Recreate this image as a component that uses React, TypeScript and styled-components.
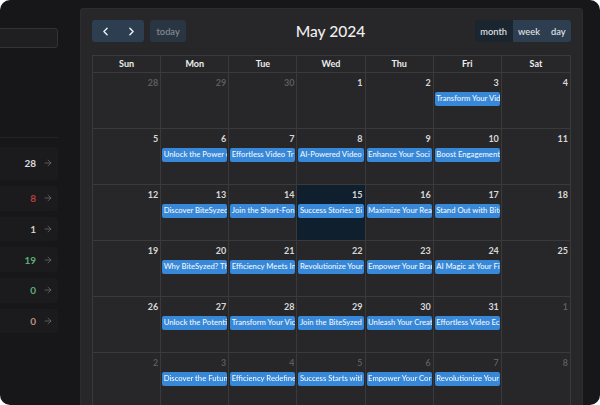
import React from "react"
import styled, {createGlobalStyle} from "styled-components"
import {ArrowRight, ChevronLeft, ChevronRight} from "lucide-react"

const GlobalStyle = createGlobalStyle`
  html, body {
    margin: 0;
    padding: 0;
    background: #fff;
    overflow: hidden;
  }
`

const Screen = styled.div`
  display: flex;
  width: 600px;
  height: 405px;
  padding-top: 8px;
  box-sizing: border-box;
  overflow: hidden;
  background: #171719;
  border-radius: 10px;
  font-family: Lato, "Liberation Sans", sans-serif;
  filter: blur(0.4px);
`

const Sidebar = styled.aside`
  flex: 0 0 58px;
  margin-right: 22px;
  padding-top: 20px;
`

const SearchBox = styled.div`
  height: 18px;
  margin-left: -8px;
  background: #1f1f21;
  border: 1px solid #333335;
  border-radius: 3px;
`

const Divider = styled.div`
  height: 1px;
  margin-top: 89px;
  background: #232325;
`

const StatList = styled.div`
  display: flex;
  flex-direction: column;
  gap: 6px;
  margin-top: 8.5px;
`

const StatRow = styled.div<{$tall?: boolean}>`
  display: flex;
  align-items: center;
  justify-content: flex-end;
  gap: 7px;
  height: ${p => (p.$tall ? 33.5 : 24.7)}px;
  padding-right: 5px;
  background: #1b1b1d;
  border-radius: 0 4px 4px 0;
  color: #7a7a7c;
`

const StatValue = styled.span<{$color: string}>`
  font-size: 10px;
  font-weight: 700;
  color: ${p => p.$color};
`

const CalendarPanel = styled.main`
  flex: 0 0 503px;
  box-sizing: border-box;
  height: 420px;
  padding: 12px 12px 0;
  background: #272729;
  border-radius: 4px;
  box-shadow: inset 0 0 0 1px #2d2d2f;
`

const Toolbar = styled.header`
  display: flex;
  align-items: center;
  justify-content: space-between;
  height: 22px;
  margin-bottom: 13px;
`

const ToolbarGroup = styled.div`
  display: flex;
  gap: 6px;
`

const ButtonGroup = styled.div`
  display: flex;
  overflow: hidden;
  height: 22px;
  border-radius: 3px;
`

const NavButton = styled.div`
  display: flex;
  align-items: center;
  justify-content: center;
  width: 26px;
  background: #2c3e50;
  color: #eef0f2;
`

const TodayButton = styled.div`
  display: flex;
  align-items: center;
  height: 22px;
  padding: 0 6.5px;
  background: #2a3542;
  border-radius: 3px;
  color: #858d95;
  font-size: 9.3px;
  font-weight: 500;
`

const ViewButton = styled.div<{$active?: boolean}>`
  display: flex;
  align-items: center;
  padding: 0 5.5px;
  background: ${p => (p.$active ? "#1a252f" : "#2c3e50")};
  color: #e4e6e8;
  font-size: 9.3px;
  font-weight: 500;
`

const Title = styled.h2`
  margin: 0;
  color: #eeeeee;
  font-size: 15.6px;
  font-weight: 500;
`

const Grid = styled.div`
  display: grid;
  grid-template-columns: repeat(7, 1fr);
  grid-template-rows: 16.5px;
  grid-auto-rows: 56.2px;
  box-sizing: border-box;
  width: 479px;
  border-top: 1px solid #3a3a3c;
  border-left: 1px solid #3a3a3c;
  border-right: 1px solid #3a3a3c;
`

const HeadCell = styled.div`
  display: flex;
  align-items: center;
  justify-content: center;
  box-sizing: border-box;
  border-right: 1px solid #3a3a3c;
  border-bottom: 1px solid #3a3a3c;
  color: #eeeeee;
  font-size: 9px;
  font-weight: 700;
  &:nth-child(7) { border-right: 0; }
`

const DayCell = styled.div<{$today?: boolean}>`
  min-width: 0;
  padding: 0 1px;
  box-sizing: border-box;
  border-right: 1px solid #3a3a3c;
  border-bottom: 1px solid #3a3a3c;
  background: ${p => (p.$today ? "#0f1f2d" : "transparent")};
  &:nth-child(7n) { border-right: 0; }
`

const DayNumber = styled.div<{$muted?: boolean}>`
  height: 19px;
  padding: 4px 1px 0 0;
  box-sizing: border-box;
  text-align: right;
  color: ${p => (p.$muted ? "#5c5c5e" : "#d8d8d8")};
  font-size: 9px;
  font-weight: 700;
`

const EventChip = styled.div`
  height: 14px;
  padding: 0 1.5px;
  overflow: hidden;
  white-space: nowrap;
  line-height: 13px;
  background: #3788d8;
  border-radius: 2px;
  color: #f2f6fb;
  font-size: 7.7px;
  font-weight: 500;
`

const stats = [
  {value: "28", color: "#dddddd", tall: true},
  {value: "8", color: "#b8403c"},
  {value: "1", color: "#d8cdc0"},
  {value: "19", color: "#5cae72"},
  {value: "0", color: "#5cae72"},
  {value: "0", color: "#b98f7c"},
]

const headers = ["Sun", "Mon", "Tue", "Wed", "Thu", "Fri", "Sat"]

type Day = {n: number; muted?: boolean; today?: boolean; event?: string}

const weeks: Day[][] = [
  [
    {n: 28, muted: true}, {n: 29, muted: true}, {n: 30, muted: true}, {n: 1}, {n: 2},
    {n: 3, event: "Transform Your Vid"}, {n: 4},
  ],
  [
    {n: 5},
    {n: 6, event: "Unlock the Power o"},
    {n: 7, event: "Effortless Video Tr"},
    {n: 8, event: "AI-Powered Video C"},
    {n: 9, event: "Enhance Your Soci"},
    {n: 10, event: "Boost Engagement"},
    {n: 11},
  ],
  [
    {n: 12},
    {n: 13, event: "Discover BiteSyzed"},
    {n: 14, event: "Join the Short-Fon"},
    {n: 15, today: true, event: "Success Stories: Bi"},
    {n: 16, event: "Maximize Your Rea"},
    {n: 17, event: "Stand Out with Bite"},
    {n: 18},
  ],
  [
    {n: 19},
    {n: 20, event: "Why BiteSyzed? Th"},
    {n: 21, event: "Efficiency Meets In"},
    {n: 22, event: "Revolutionize Your"},
    {n: 23, event: "Empower Your Brar"},
    {n: 24, event: "AI Magic at Your Fi"},
    {n: 25},
  ],
  [
    {n: 26},
    {n: 27, event: "Unlock the Potenti"},
    {n: 28, event: "Transform Your Vic"},
    {n: 29, event: "Join the BiteSyzed"},
    {n: 30, event: "Unleash Your Creat"},
    {n: 31, event: "Effortless Video Ec"},
    {n: 1, muted: true},
  ],
  [
    {n: 2, muted: true},
    {n: 3, muted: true, event: "Discover the Futun"},
    {n: 4, muted: true, event: "Efficiency Redefine"},
    {n: 5, muted: true, event: "Success Starts witl"},
    {n: 6, muted: true, event: "Empower Your Cor"},
    {n: 7, muted: true, event: "Revolutionize Your"},
    {n: 8, muted: true},
  ],
]

export default function App() {
  return (
    <>
      <GlobalStyle/>
      <Screen>
        <Sidebar>
          <SearchBox/>
          <Divider/>
          <StatList>
            {stats.map((s, i) => (
              <StatRow key={i} $tall={s.tall}>
                <StatValue $color={s.color}>{s.value}</StatValue>
                <ArrowRight size={10} strokeWidth={1.6}/>
              </StatRow>
            ))}
          </StatList>
        </Sidebar>

        <CalendarPanel>
          <Toolbar>
            <ToolbarGroup>
              <ButtonGroup>
                <NavButton><ChevronLeft size={13} strokeWidth={2.6}/></NavButton>
                <NavButton><ChevronRight size={13} strokeWidth={2.6}/></NavButton>
              </ButtonGroup>
              <TodayButton>today</TodayButton>
            </ToolbarGroup>
            <Title>May 2024</Title>
            <ToolbarGroup>
              <ButtonGroup>
                <ViewButton $active>month</ViewButton>
                <ViewButton>week</ViewButton>
                <ViewButton>day</ViewButton>
              </ButtonGroup>
            </ToolbarGroup>
          </Toolbar>

          <Grid>
            {headers.map(h => <HeadCell key={h}>{h}</HeadCell>)}
            {weeks.flat().map((d, i) => (
              <DayCell key={i} $today={d.today}>
                <DayNumber $muted={d.muted}>{d.n}</DayNumber>
                {d.event && <EventChip>{d.event}</EventChip>}
              </DayCell>
            ))}
          </Grid>
        </CalendarPanel>
      </Screen>
    </>
  )
}
